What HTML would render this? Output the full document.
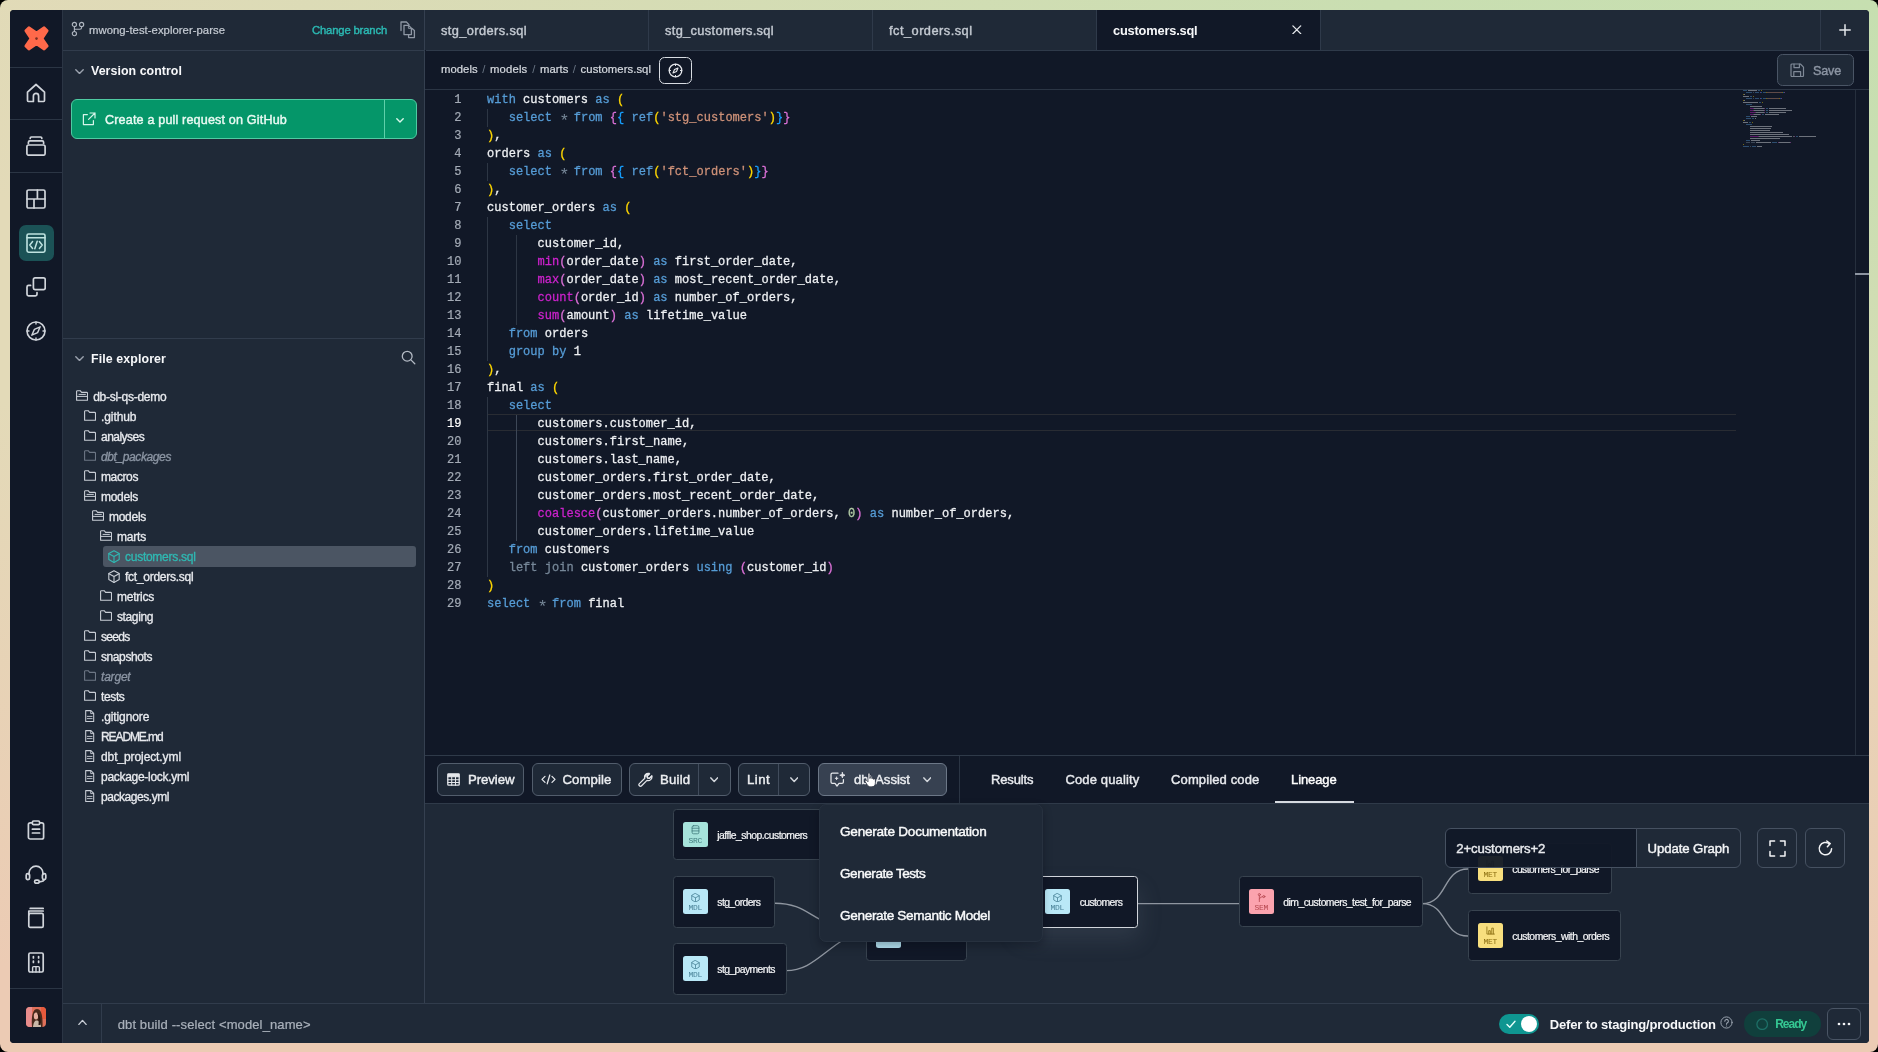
<!DOCTYPE html>
<html>
<head>
<meta charset="utf-8">
<title>dbt Cloud IDE</title>
<style>
*{box-sizing:border-box;margin:0;padding:0}
html,body{width:1878px;height:1052px;overflow:hidden;background:#000}
body{font-family:"Liberation Sans",sans-serif;color:#e5e7eb;position:relative}
.abs{position:absolute}
#frame{position:absolute;left:0;top:0;width:1878px;height:1052px;border-radius:8px;overflow:hidden;
 background:
  linear-gradient(180deg,rgba(236,203,180,0) 38%,rgba(236,203,180,1) 92%),
  radial-gradient(ellipse 105% 62% at 100% 0%,#c6dfb0 0%,#c9deb1 25%,rgba(203,222,178,0) 100%),
  #e3dab8;}
#app{position:absolute;left:10px;top:10px;width:1859.2px;height:1032.6px;border-radius:4px;overflow:hidden;background:#111827}
#c{position:absolute;left:-10px;top:-10px;width:1878px;height:1052px;will-change:transform}
.t{position:absolute;white-space:pre;line-height:1}
.m{font-family:"Liberation Mono",monospace}

.cl{position:absolute;left:487px;height:18px;line-height:18px;font-family:"Liberation Mono",monospace;font-size:12.045px;white-space:pre;color:#eef0f3;-webkit-text-stroke:0.28px}
.as{display:inline-block;width:7.227px;text-align:center;font-size:17px;line-height:0;position:relative;top:5.2px;-webkit-text-stroke:0}
.ln{position:absolute;left:430px;width:31.5px;text-align:right;height:18px;line-height:18px;font-family:"Liberation Mono",monospace;font-size:12.045px;color:#a4abb6;-webkit-text-stroke:0.2px}

</style>
</head>
<body>
<div id="frame"></div>
<div id="app"><div id="c">
<!-- part_nav -->
<div class="abs" style="left:10px;top:10px;width:52px;height:1033px;background:#111827;"></div>
<div class="abs" style="left:62px;top:10px;width:1px;height:1033px;background:#2b3544"></div>
<svg class="abs" style="left:23.2px;top:24.9px" width="27" height="26.8" viewBox="0 0 26 26"><polygon points="2.6,5.6 5.6,2.6 13,7.6 20.4,2.6 23.4,5.6 18.4,13 23.4,20.4 20.4,23.4 13,18.4 5.6,23.4 2.6,20.4 7.6,13" fill="#ff694a" stroke="#ff694a" stroke-width="2.6" stroke-linejoin="round"/><circle cx="13" cy="13.2" r="1.25" fill="#7a2e22"/></svg>
<div class="abs" style="left:10px;top:67px;width:52px;height:1px;background:#2b3544"></div>
<svg class="abs" style="left:26px;top:83px;" width="20" height="20" viewBox="0 0 20 20" fill="none" stroke="#d1d5db" stroke-width="1.7" stroke-linecap="round" stroke-linejoin="round"><path d="M1.5 9.2 L10 1.5 L18.5 9.2 V17.6 a.9 .9 0 0 1 -.9 .9 H12.6 V13 a2.6 2.6 0 0 0 -5.2 0 V18.5 H2.4 a.9 .9 0 0 1 -.9 -.9 Z"/></svg>
<div class="abs" style="left:10px;top:119px;width:52px;height:1px;background:#2b3544"></div>
<svg class="abs" style="left:26px;top:136px;" width="20" height="20" viewBox="0 0 20 20" fill="none" stroke="#d1d5db" stroke-width="1.7" stroke-linecap="round" stroke-linejoin="round"><rect x="0.9" y="9" width="18.2" height="10.2" rx="1.7"/><path d="M2.4 7.4 V6.2 a1.4 1.4 0 0 1 1.4 -1.4 H16.2 a1.4 1.4 0 0 1 1.4 1.4 V7.4"/><path d="M4.2 2.4 V2.2 a1.2 1.2 0 0 1 1.2 -1.2 H14.6 a1.2 1.2 0 0 1 1.2 1.2 V2.4"/></svg>
<div class="abs" style="left:10px;top:172px;width:52px;height:1px;background:#2b3544"></div>
<svg class="abs" style="left:26px;top:189px;" width="20" height="20" viewBox="0 0 20 20" fill="none" stroke="#d1d5db" stroke-width="1.7" stroke-linecap="round" stroke-linejoin="round"><rect x="1" y="1" width="18" height="18" rx="1.6"/><path d="M1 10 H19 M11.4 1 V10 M8 10 V19"/></svg>
<div class="abs" style="left:19px;top:225px;width:35px;height:36px;background:#1b5256;border-radius:7px;"></div>
<svg class="abs" style="left:26px;top:233px;" width="20" height="20" viewBox="0 0 20 20" fill="none" stroke="#bfe3e0" stroke-width="1.6" stroke-linecap="round" stroke-linejoin="round"><rect x="1" y="1" width="18" height="18.2" rx="1.6"/><path d="M1 4.8 H19"/><path d="M6.6 8.6 L3.8 12 L6.6 15.4 M13.4 8.6 L16.2 12 L13.4 15.4 M11.2 8.2 L8.8 15.8" stroke-width="1.5"/></svg>
<svg class="abs" style="left:26px;top:277px;" width="20" height="20" viewBox="0 0 20 20" fill="none" stroke="#d1d5db" stroke-width="1.7" stroke-linecap="round" stroke-linejoin="round"><rect x="7.4" y="0.9" width="11.8" height="11.8" rx="1.6"/><path d="M4.6 8.4 H2.6 a1.6 1.6 0 0 0 -1.6 1.6 V17.2 a1.6 1.6 0 0 0 1.6 1.6 H9.4 a1.6 1.6 0 0 0 1.6 -1.6 V15.6"/></svg>
<svg class="abs" style="left:26px;top:321px;" width="20" height="20" viewBox="0 0 20 20" fill="none" stroke="#d1d5db" stroke-width="1.6" stroke-linecap="round" stroke-linejoin="round"><circle cx="10" cy="10" r="9"/><path d="M10 1 V3 M10 17 V19 M1 10 H3 M17 10 H19" stroke-width="1.4"/><path d="M14.2 5.8 L11.6 11.6 L5.8 14.2 L8.4 8.4 Z" stroke-width="1.4"/></svg>
<svg class="abs" style="left:27px;top:820px;" width="18" height="20" viewBox="0 0 18 20" fill="none" stroke="#d1d5db" stroke-width="1.7" stroke-linecap="round" stroke-linejoin="round"><rect x="1.4" y="2.8" width="15.2" height="16.2" rx="1.8"/><rect x="5.4" y="1" width="7.2" height="3.6" rx="1.2" fill="#111827"/><path d="M5.4 9.2 H12.6 M5.4 13 H12.6"/></svg>
<svg class="abs" style="left:25px;top:864px;" width="22" height="20" viewBox="0 0 22 20" fill="none" stroke="#d1d5db" stroke-width="1.7" stroke-linecap="round" stroke-linejoin="round"><path d="M4 10.5 V9.2 a7 7 0 0 1 14 0 V10.5"/><rect x="1.2" y="9.6" width="3.4" height="6" rx="1.6"/><rect x="17.4" y="9.6" width="3.4" height="6" rx="1.6"/><path d="M19 15.6 Q19 17.8 14.4 17.8"/><rect x="9.6" y="16.2" width="4.6" height="3" rx="1.4"/></svg>
<svg class="abs" style="left:27px;top:907px;" width="18" height="22" viewBox="0 0 18 22" fill="none" stroke="#d1d5db" stroke-width="1.7" stroke-linecap="round" stroke-linejoin="round"><rect x="1.8" y="6.4" width="14.4" height="14" rx="1.4"/><path d="M1.8 8 V4 M1.8 4 H16.2 M3.2 1.4 H16.2"/></svg>
<svg class="abs" style="left:27px;top:952px;" width="18" height="21" viewBox="0 0 18 21" fill="none" stroke="#d1d5db" stroke-width="1.7" stroke-linecap="round" stroke-linejoin="round"><rect x="1.8" y="1" width="14.4" height="19" rx="1.4"/><path d="M6.4 4.6 V6 M11.6 4.6 V6 M6.4 9 V10.4 M11.6 9 V10.4"/><path d="M5.6 20 V15.6 a1 1 0 0 1 1 -1 H11.4 a1 1 0 0 1 1 1 V20 M9 15 V20" stroke-width="1.4"/></svg>
<div class="abs" style="left:10px;top:988px;width:52px;height:1px;background:#2b3544"></div>
<svg class="abs" style="left:26px;top:1007px" width="20" height="20" viewBox="0 0 20 20"><defs><clipPath id="av"><rect x="0" y="0" width="20" height="20" rx="4"/></clipPath></defs><g clip-path="url(#av)"><rect width="20" height="20" fill="#e0705a"/><rect x="0" y="0" width="6" height="20" fill="#e88c8c"/><rect x="15" y="0" width="5" height="12" fill="#e85a3c"/><path d="M6 20 C5 9 7 2 11 2 C15 2 17 8 16.5 20 Z" fill="#4a2a1c"/><ellipse cx="10" cy="9" rx="2.2" ry="3.6" fill="#e8b0a0"/><path d="M7 20 C7.5 15 9 13.5 10.5 13.5 C13 13.5 15 16 15 20 Z" fill="#c9b8a8"/><path d="M11 6 C14 7 15 12 14.5 18 L12.5 18 C13 12 12.5 9 11 6 Z" fill="#2a1710"/></g></svg>
<!-- part_side -->
<div class="abs" style="left:63px;top:10px;width:361.5px;height:993px;background:#1f2937;"></div>
<div class="abs" style="left:424.3px;top:10px;width:1px;height:993px;background:#354050"></div>
<svg class="abs" style="left:71px;top:21px;" width="14" height="16" viewBox="0 0 14 16" fill="none" stroke="#aeb5bf" stroke-width="1.15" stroke-linecap="round" stroke-linejoin="round"><circle cx="3.4" cy="3.4" r="2.1"/><circle cx="10.6" cy="3.4" r="2.1"/><circle cx="3.4" cy="12.6" r="2.1"/><path d="M3.4 5.6 V10.4 M10.6 5.6 V6.4 a1.8 1.8 0 0 1 -1.8 1.8 H3.6"/></svg>
<div class="t" style="left:89px;top:24.66px;font-size:11.3px;color:#c4cad2;-webkit-text-stroke:0.22px #c4cad2;letter-spacing:0.041px;">mwong-test-explorer-parse</div>
<div class="t" style="left:312px;top:24.66px;font-size:11.3px;color:#2bb8b2;-webkit-text-stroke:0.42px #2bb8b2;letter-spacing:-0.174px;">Change branch</div>
<svg class="abs" style="left:400px;top:20.5px;" width="16" height="18" viewBox="0 0 16 18" fill="none" stroke="#8f98a5" stroke-width="1.3" stroke-linecap="round" stroke-linejoin="round"><path d="M1 9.6 V1 H6.4 L9 3.6"/><path d="M4 4.4 H8.6 L11.4 7.2 V13.6 H4 Z" /><path d="M8.4 4.6 V7.4 H11.2" stroke-width="0.9"/><path d="M8.6 13.8 V16.6 H14.4 V9.6 L12 7.4" /></svg>
<div class="abs" style="left:63px;top:50px;width:362px;height:1px;background:#313c4c"></div>
<svg class="abs" style="left:74.5px;top:68.75px;" width="9" height="5.5" viewBox="0 0 9 5.5" fill="none" stroke="#9ca3af" stroke-width="1.4" stroke-linecap="round" stroke-linejoin="round"><path d="M0.8 0.8 L4.5 4.5 L8.2 0.8"/></svg>
<div class="t" style="left:91px;top:65.32px;font-size:12.4px;color:#f7f8fa;font-weight:700;letter-spacing:0.053px;">Version control</div>
<div class="abs" style="left:71px;top:99px;width:346px;height:40px;background:#059669;border:1px solid #4fcba2;border-radius:6px;"></div>
<div class="abs" style="left:384px;top:100px;width:1px;height:38px;background:#5fd0aa"></div>
<svg class="abs" style="left:82px;top:112px;" width="14" height="14" viewBox="0 0 14 14" fill="none" stroke="#d6f5ea" stroke-width="1.2" stroke-linecap="round" stroke-linejoin="round"><path d="M5.4 2.6 H1.4 V12.6 H11.4 V8.6"/><path d="M8 1 H13 V6 M13 1 L6.6 7.4"/></svg>
<div class="t" style="left:105px;top:113.73px;font-size:12.6px;color:#eafaf3;-webkit-text-stroke:0.42px #eafaf3;letter-spacing:0.157px;">Create a pull request on GitHub</div>
<svg class="abs" style="left:396.0px;top:117.8px;" width="8" height="5.0" viewBox="0 0 8 5.0" fill="none" stroke="#d9f7ea" stroke-width="1.4" stroke-linecap="round" stroke-linejoin="round"><path d="M0.8 0.8 L4.0 4.0 L7.2 0.8"/></svg>
<div class="abs" style="left:63px;top:338px;width:362px;height:1px;background:#313c4c"></div>
<svg class="abs" style="left:74.5px;top:355.75px;" width="9" height="5.5" viewBox="0 0 9 5.5" fill="none" stroke="#9ca3af" stroke-width="1.4" stroke-linecap="round" stroke-linejoin="round"><path d="M0.8 0.8 L4.5 4.5 L8.2 0.8"/></svg>
<div class="t" style="left:91px;top:352.52px;font-size:12.4px;color:#f7f8fa;font-weight:700;letter-spacing:0.101px;">File explorer</div>
<svg class="abs" style="left:401px;top:350px;" width="15" height="15" viewBox="0 0 15 15" fill="none" stroke="#b3bac4" stroke-width="1.3" stroke-linecap="round" stroke-linejoin="round"><circle cx="6.2" cy="6.2" r="4.9"/><path d="M9.9 9.9 L13.8 13.8"/></svg>
<svg class="abs" style="left:76px;top:390.0px;" width="12" height="11" viewBox="0 0 12 11" fill="none" stroke="#c9ced6" stroke-width="1.1" stroke-linecap="round" stroke-linejoin="round"><path d="M0.6 10.2 V1.6 a.9 .9 0 0 1 .9 -.9 H4.2 L5.6 2.4 H10.6 a.9 .9 0 0 1 .9 .9 V10.2 Z"/><path d="M3 4.4 H9.4 M0.8 6.4 H11.2" stroke-width="1"/></svg>
<div class="t" style="left:93.2px;top:391.22px;font-size:12px;color:#e8eaee;-webkit-text-stroke:0.32px #e8eaee;letter-spacing:-0.269px;">db-sl-qs-demo</div>
<svg class="abs" style="left:84px;top:410.0px;" width="12" height="11" viewBox="0 0 12 11" fill="none" stroke="#c9ced6" stroke-width="1.1" stroke-linecap="round" stroke-linejoin="round"><path d="M0.6 10.2 V1.6 a.9 .9 0 0 1 .9 -.9 H4.2 L5.6 2.4 H10.6 a.9 .9 0 0 1 .9 .9 V10.2 Z"/></svg>
<div class="t" style="left:101px;top:411.22px;font-size:12px;color:#e8eaee;-webkit-text-stroke:0.32px #e8eaee;letter-spacing:-0.090px;">.github</div>
<svg class="abs" style="left:84px;top:430.0px;" width="12" height="11" viewBox="0 0 12 11" fill="none" stroke="#c9ced6" stroke-width="1.1" stroke-linecap="round" stroke-linejoin="round"><path d="M0.6 10.2 V1.6 a.9 .9 0 0 1 .9 -.9 H4.2 L5.6 2.4 H10.6 a.9 .9 0 0 1 .9 .9 V10.2 Z"/></svg>
<div class="t" style="left:101px;top:431.22px;font-size:12px;color:#e8eaee;-webkit-text-stroke:0.32px #e8eaee;letter-spacing:-0.522px;">analyses</div>
<svg class="abs" style="left:84px;top:450.0px;" width="12" height="11" viewBox="0 0 12 11" fill="none" stroke="#6d7785" stroke-width="1.1" stroke-linecap="round" stroke-linejoin="round"><path d="M0.6 10.2 V1.6 a.9 .9 0 0 1 .9 -.9 H4.2 L5.6 2.4 H10.6 a.9 .9 0 0 1 .9 .9 V10.2 Z"/></svg>
<div class="t" style="left:101px;top:451.22px;font-size:12px;color:#8b95a3;-webkit-text-stroke:0.32px #8b95a3;font-style:italic;letter-spacing:-0.395px;">dbt_packages</div>
<svg class="abs" style="left:84px;top:470.0px;" width="12" height="11" viewBox="0 0 12 11" fill="none" stroke="#c9ced6" stroke-width="1.1" stroke-linecap="round" stroke-linejoin="round"><path d="M0.6 10.2 V1.6 a.9 .9 0 0 1 .9 -.9 H4.2 L5.6 2.4 H10.6 a.9 .9 0 0 1 .9 .9 V10.2 Z"/></svg>
<div class="t" style="left:101px;top:471.22px;font-size:12px;color:#e8eaee;-webkit-text-stroke:0.32px #e8eaee;letter-spacing:-0.391px;">macros</div>
<svg class="abs" style="left:84px;top:490.0px;" width="12" height="11" viewBox="0 0 12 11" fill="none" stroke="#c9ced6" stroke-width="1.1" stroke-linecap="round" stroke-linejoin="round"><path d="M0.6 10.2 V1.6 a.9 .9 0 0 1 .9 -.9 H4.2 L5.6 2.4 H10.6 a.9 .9 0 0 1 .9 .9 V10.2 Z"/><path d="M3 4.4 H9.4 M0.8 6.4 H11.2" stroke-width="1"/></svg>
<div class="t" style="left:101px;top:491.22px;font-size:12px;color:#e8eaee;-webkit-text-stroke:0.32px #e8eaee;letter-spacing:-0.281px;">models</div>
<svg class="abs" style="left:92px;top:510.0px;" width="12" height="11" viewBox="0 0 12 11" fill="none" stroke="#c9ced6" stroke-width="1.1" stroke-linecap="round" stroke-linejoin="round"><path d="M0.6 10.2 V1.6 a.9 .9 0 0 1 .9 -.9 H4.2 L5.6 2.4 H10.6 a.9 .9 0 0 1 .9 .9 V10.2 Z"/><path d="M3 4.4 H9.4 M0.8 6.4 H11.2" stroke-width="1"/></svg>
<div class="t" style="left:109px;top:511.22px;font-size:12px;color:#e8eaee;-webkit-text-stroke:0.32px #e8eaee;letter-spacing:-0.281px;">models</div>
<svg class="abs" style="left:100px;top:530.0px;" width="12" height="11" viewBox="0 0 12 11" fill="none" stroke="#c9ced6" stroke-width="1.1" stroke-linecap="round" stroke-linejoin="round"><path d="M0.6 10.2 V1.6 a.9 .9 0 0 1 .9 -.9 H4.2 L5.6 2.4 H10.6 a.9 .9 0 0 1 .9 .9 V10.2 Z"/><path d="M3 4.4 H9.4 M0.8 6.4 H11.2" stroke-width="1"/></svg>
<div class="t" style="left:117px;top:531.22px;font-size:12px;color:#e8eaee;-webkit-text-stroke:0.32px #e8eaee;letter-spacing:-0.200px;">marts</div>
<div class="abs" style="left:103px;top:546px;width:313px;height:21px;background:#4b5563;border-radius:3px;"></div>
<svg class="abs" style="left:108px;top:549.5px;" width="12" height="13.2" viewBox="0 0 12 13.2" fill="none" stroke="#2fb9b3" stroke-width="1.1" stroke-linecap="round" stroke-linejoin="round"><path d="M6 0.7 L11.2 3.6 V9.6 L6 12.5 L0.8 9.6 V3.6 Z"/><path d="M0.9 3.7 L6 6.6 L11.1 3.7 M6 6.6 V12.4" /></svg>
<div class="t" style="left:125px;top:551.22px;font-size:12px;color:#2fb9b3;-webkit-text-stroke:0.32px #2fb9b3;letter-spacing:-0.264px;">customers.sql</div>
<svg class="abs" style="left:108px;top:569.5px;" width="12" height="13.2" viewBox="0 0 12 13.2" fill="none" stroke="#c9ced6" stroke-width="1.1" stroke-linecap="round" stroke-linejoin="round"><path d="M6 0.7 L11.2 3.6 V9.6 L6 12.5 L0.8 9.6 V3.6 Z"/><path d="M0.9 3.7 L6 6.6 L11.1 3.7 M6 6.6 V12.4" /></svg>
<div class="t" style="left:125px;top:571.22px;font-size:12px;color:#e8eaee;-webkit-text-stroke:0.32px #e8eaee;letter-spacing:-0.259px;">fct_orders.sql</div>
<svg class="abs" style="left:100px;top:590.0px;" width="12" height="11" viewBox="0 0 12 11" fill="none" stroke="#c9ced6" stroke-width="1.1" stroke-linecap="round" stroke-linejoin="round"><path d="M0.6 10.2 V1.6 a.9 .9 0 0 1 .9 -.9 H4.2 L5.6 2.4 H10.6 a.9 .9 0 0 1 .9 .9 V10.2 Z"/></svg>
<div class="t" style="left:117px;top:591.22px;font-size:12px;color:#e8eaee;-webkit-text-stroke:0.32px #e8eaee;letter-spacing:-0.239px;">metrics</div>
<svg class="abs" style="left:100px;top:610.0px;" width="12" height="11" viewBox="0 0 12 11" fill="none" stroke="#c9ced6" stroke-width="1.1" stroke-linecap="round" stroke-linejoin="round"><path d="M0.6 10.2 V1.6 a.9 .9 0 0 1 .9 -.9 H4.2 L5.6 2.4 H10.6 a.9 .9 0 0 1 .9 .9 V10.2 Z"/></svg>
<div class="t" style="left:117px;top:611.22px;font-size:12px;color:#e8eaee;-webkit-text-stroke:0.32px #e8eaee;letter-spacing:-0.386px;">staging</div>
<svg class="abs" style="left:84px;top:630.0px;" width="12" height="11" viewBox="0 0 12 11" fill="none" stroke="#c9ced6" stroke-width="1.1" stroke-linecap="round" stroke-linejoin="round"><path d="M0.6 10.2 V1.6 a.9 .9 0 0 1 .9 -.9 H4.2 L5.6 2.4 H10.6 a.9 .9 0 0 1 .9 .9 V10.2 Z"/></svg>
<div class="t" style="left:101px;top:631.22px;font-size:12px;color:#e8eaee;-webkit-text-stroke:0.32px #e8eaee;letter-spacing:-0.706px;">seeds</div>
<svg class="abs" style="left:84px;top:650.0px;" width="12" height="11" viewBox="0 0 12 11" fill="none" stroke="#c9ced6" stroke-width="1.1" stroke-linecap="round" stroke-linejoin="round"><path d="M0.6 10.2 V1.6 a.9 .9 0 0 1 .9 -.9 H4.2 L5.6 2.4 H10.6 a.9 .9 0 0 1 .9 .9 V10.2 Z"/></svg>
<div class="t" style="left:101px;top:651.22px;font-size:12px;color:#e8eaee;-webkit-text-stroke:0.32px #e8eaee;letter-spacing:-0.411px;">snapshots</div>
<svg class="abs" style="left:84px;top:670.0px;" width="12" height="11" viewBox="0 0 12 11" fill="none" stroke="#6d7785" stroke-width="1.1" stroke-linecap="round" stroke-linejoin="round"><path d="M0.6 10.2 V1.6 a.9 .9 0 0 1 .9 -.9 H4.2 L5.6 2.4 H10.6 a.9 .9 0 0 1 .9 .9 V10.2 Z"/></svg>
<div class="t" style="left:101px;top:671.22px;font-size:12px;color:#8b95a3;-webkit-text-stroke:0.32px #8b95a3;font-style:italic;letter-spacing:-0.198px;">target</div>
<svg class="abs" style="left:84px;top:690.0px;" width="12" height="11" viewBox="0 0 12 11" fill="none" stroke="#c9ced6" stroke-width="1.1" stroke-linecap="round" stroke-linejoin="round"><path d="M0.6 10.2 V1.6 a.9 .9 0 0 1 .9 -.9 H4.2 L5.6 2.4 H10.6 a.9 .9 0 0 1 .9 .9 V10.2 Z"/></svg>
<div class="t" style="left:101px;top:691.22px;font-size:12px;color:#e8eaee;-webkit-text-stroke:0.32px #e8eaee;letter-spacing:-0.369px;">tests</div>
<svg class="abs" style="left:85.4px;top:709.8px;" width="9.4" height="12" viewBox="0 0 9.2 12" fill="none" stroke="#c9ced6" stroke-width="1.05" stroke-linecap="round" stroke-linejoin="round"><path d="M0.6 0.6 H5.8 L8.6 3.4 V11.4 H0.6 Z"/><path d="M5.6 0.8 V3.6 H8.4" stroke-width="0.9"/><path d="M2.2 6.4 H7 M2.2 8.6 H7" stroke-width="0.9"/></svg>
<div class="t" style="left:101px;top:711.22px;font-size:12px;color:#e8eaee;-webkit-text-stroke:0.32px #e8eaee;letter-spacing:-0.117px;">.gitignore</div>
<svg class="abs" style="left:85.4px;top:729.8px;" width="9.4" height="12" viewBox="0 0 9.2 12" fill="none" stroke="#c9ced6" stroke-width="1.05" stroke-linecap="round" stroke-linejoin="round"><path d="M0.6 0.6 H5.8 L8.6 3.4 V11.4 H0.6 Z"/><path d="M5.6 0.8 V3.6 H8.4" stroke-width="0.9"/><path d="M2.2 6.4 H7 M2.2 8.6 H7" stroke-width="0.9"/></svg>
<div class="t" style="left:101px;top:731.22px;font-size:12px;color:#e8eaee;-webkit-text-stroke:0.32px #e8eaee;letter-spacing:-1.094px;">README.md</div>
<svg class="abs" style="left:85.4px;top:749.8px;" width="9.4" height="12" viewBox="0 0 9.2 12" fill="none" stroke="#c9ced6" stroke-width="1.05" stroke-linecap="round" stroke-linejoin="round"><path d="M0.6 0.6 H5.8 L8.6 3.4 V11.4 H0.6 Z"/><path d="M5.6 0.8 V3.6 H8.4" stroke-width="0.9"/><path d="M2.2 6.4 H7 M2.2 8.6 H7" stroke-width="0.9"/></svg>
<div class="t" style="left:101px;top:751.22px;font-size:12px;color:#e8eaee;-webkit-text-stroke:0.32px #e8eaee;letter-spacing:-0.092px;">dbt_project.yml</div>
<svg class="abs" style="left:85.4px;top:769.8px;" width="9.4" height="12" viewBox="0 0 9.2 12" fill="none" stroke="#c9ced6" stroke-width="1.05" stroke-linecap="round" stroke-linejoin="round"><path d="M0.6 0.6 H5.8 L8.6 3.4 V11.4 H0.6 Z"/><path d="M5.6 0.8 V3.6 H8.4" stroke-width="0.9"/><path d="M2.2 6.4 H7 M2.2 8.6 H7" stroke-width="0.9"/></svg>
<div class="t" style="left:101px;top:771.22px;font-size:12px;color:#e8eaee;-webkit-text-stroke:0.32px #e8eaee;letter-spacing:-0.294px;">package-lock.yml</div>
<svg class="abs" style="left:85.4px;top:789.8px;" width="9.4" height="12" viewBox="0 0 9.2 12" fill="none" stroke="#c9ced6" stroke-width="1.05" stroke-linecap="round" stroke-linejoin="round"><path d="M0.6 0.6 H5.8 L8.6 3.4 V11.4 H0.6 Z"/><path d="M5.6 0.8 V3.6 H8.4" stroke-width="0.9"/><path d="M2.2 6.4 H7 M2.2 8.6 H7" stroke-width="0.9"/></svg>
<div class="t" style="left:101px;top:791.22px;font-size:12px;color:#e8eaee;-webkit-text-stroke:0.32px #e8eaee;letter-spacing:-0.448px;">packages.yml</div>
<!-- part_main -->
<div class="abs" style="left:425.3px;top:10px;width:1444px;height:40px;background:#1f2937;"></div>
<div class="abs" style="left:1097px;top:10px;width:223px;height:40px;background:#111827;"></div>
<div class="abs" style="left:648px;top:10px;width:1px;height:40px;background:#2f3a4a"></div>
<div class="abs" style="left:872px;top:10px;width:1px;height:40px;background:#2f3a4a"></div>
<div class="abs" style="left:1096px;top:10px;width:1px;height:40px;background:#2f3a4a"></div>
<div class="abs" style="left:1320px;top:10px;width:1px;height:40px;background:#2f3a4a"></div>
<div class="abs" style="left:1819.8px;top:10px;width:1px;height:40px;background:#2f3a4a"></div>
<div class="abs" style="left:426px;top:50px;width:1443px;height:1px;background:#2f3a4a"></div>
<div class="t" style="left:441px;top:25.03px;font-size:12.8px;color:#c3c9d1;-webkit-text-stroke:0.42px #c3c9d1;letter-spacing:0.402px;">stg_orders.sql</div>
<div class="t" style="left:665px;top:25.03px;font-size:12.8px;color:#c3c9d1;-webkit-text-stroke:0.42px #c3c9d1;letter-spacing:0.346px;">stg_customers.sql</div>
<div class="t" style="left:889px;top:25.03px;font-size:12.8px;color:#c3c9d1;-webkit-text-stroke:0.42px #c3c9d1;letter-spacing:0.477px;">fct_orders.sql</div>
<div class="t" style="left:1113px;top:25.23px;font-size:12.8px;color:#f7f8fa;font-weight:700;letter-spacing:-0.175px;">customers.sql</div>
<svg class="abs" style="left:1292.2px;top:24.9px;" width="9.6" height="9.6" viewBox="0 0 9.6 9.6" fill="none" stroke="#e5e7eb" stroke-width="1.3" stroke-linecap="round" stroke-linejoin="round"><path d="M0.9 0.9 L8.7 8.7 M8.7 0.9 L0.9 8.7"/></svg>
<svg class="abs" style="left:1839px;top:23.6px;" width="12" height="12" viewBox="0 0 12 12" fill="none" stroke="#e5e7eb" stroke-width="1.5" stroke-linecap="round" stroke-linejoin="round"><path d="M6 0.8 V11.2 M0.8 6 H11.2"/></svg>
<div class="t" style="left:441px;top:63.66px;font-size:11.3px;color:#d5d9df;-webkit-text-stroke:0.22px #d5d9df;letter-spacing:0.030px;">models</div>
<div class="t" style="left:482.2px;top:63.66px;font-size:11.3px;color:#6b7685;">/</div>
<div class="t" style="left:490px;top:63.66px;font-size:11.3px;color:#d5d9df;-webkit-text-stroke:0.22px #d5d9df;letter-spacing:0.163px;">models</div>
<div class="t" style="left:532.2px;top:63.66px;font-size:11.3px;color:#6b7685;">/</div>
<div class="t" style="left:540px;top:63.66px;font-size:11.3px;color:#d5d9df;-webkit-text-stroke:0.22px #d5d9df;letter-spacing:0.030px;">marts</div>
<div class="t" style="left:572.8px;top:63.66px;font-size:11.3px;color:#6b7685;">/</div>
<div class="t" style="left:580.6px;top:63.66px;font-size:11.3px;color:#d5d9df;-webkit-text-stroke:0.22px #d5d9df;letter-spacing:0.055px;">customers.sql</div>
<div class="abs" style="left:659px;top:56.5px;width:32.5px;height:27px;border:1.3px solid #d8dce2;border-radius:5.5px;"></div>
<svg class="abs" style="left:667.5px;top:62.5px;" width="15" height="15" viewBox="0 0 15 15" fill="none" stroke="#e5e7eb" stroke-width="1.3" stroke-linecap="round" stroke-linejoin="round"><circle cx="7.5" cy="7.5" r="6.3"/><path d="M7.5 1.2 V2.6 M7.5 12.4 V13.8 M1.2 7.5 H2.6 M12.4 7.5 H13.8" stroke-width="1"/><path d="M10 5 L8.5 8.5 L5 10 L6.5 6.5 Z" stroke-width="1.1"/></svg>
<div class="abs" style="left:1777px;top:53.5px;width:76.5px;height:32.8px;background:#1f2937;border:1px solid #4a5565;border-radius:5.5px;"></div>
<svg class="abs" style="left:1790px;top:62.8px;" width="14.5" height="14.5" viewBox="0 0 14.5 14.5" fill="none" stroke="#7f8997" stroke-width="1.2" stroke-linecap="round" stroke-linejoin="round"><path d="M1 2 a1 1 0 0 1 1 -1 H10.4 L13.5 4.1 V12.5 a1 1 0 0 1 -1 1 H2 a1 1 0 0 1 -1 -1 Z"/><path d="M4 1.2 V4.6 H9.4 V1.2 M3.8 13.4 V8.6 H10.6 V13.4" /></svg>
<div class="t" style="left:1813px;top:64.93px;font-size:12.6px;color:#8c95a3;-webkit-text-stroke:0.42px #8c95a3;letter-spacing:-0.180px;">Save</div>
<div class="abs" style="left:425.3px;top:88.6px;width:1444px;height:1px;background:#2b3544"></div>
<div class="abs" style="left:1855px;top:90px;width:1px;height:665px;background:#262f3d"></div>
<div class="abs" style="left:1855px;top:272.5px;width:14px;height:2px;background:#8d95a1;"></div>
<div class="abs" style="left:425.3px;top:755px;width:1444px;height:1px;background:#2f3a49"></div>
<div class="abs" style="left:425.3px;top:803.4px;width:1444px;height:1px;background:#2f3a49"></div>
<div class="abs" style="left:958.5px;top:756px;width:1px;height:47px;background:#2b3544"></div>
<div class="abs" style="left:437px;top:763px;width:87px;height:32.5px;background:#1f2937;border:1px solid #525d6c;border-radius:6px;"></div>
<svg class="abs" style="left:446.5px;top:772.5px;" width="13" height="13" viewBox="0 0 13 13" fill="none" stroke="#e5e7eb" stroke-width="1.3" stroke-linecap="round" stroke-linejoin="round"><rect x="0.8" y="0.8" width="11.4" height="11.4" rx="0.7"/><path d="M0.8 3.8 H12.2 M0.8 6.7 H12.2 M0.8 9.5 H12.2 M4.7 3.6 V12.2 M8.5 3.6 V12.2" stroke-width="1.05"/><rect x="0.8" y="0.8" width="11.4" height="3" fill="#e5e7eb" stroke="none"/></svg>
<div class="t" style="left:468px;top:773.13px;font-size:13.2px;color:#eceef1;-webkit-text-stroke:0.42px #eceef1;letter-spacing:-0.072px;">Preview</div>
<div class="abs" style="left:532px;top:763px;width:89.5px;height:32.5px;background:#1f2937;border:1px solid #525d6c;border-radius:6px;"></div>
<svg class="abs" style="left:540.5px;top:774px;" width="15" height="11" viewBox="0 0 15 11" fill="none" stroke="#e5e7eb" stroke-width="1.3" stroke-linecap="round" stroke-linejoin="round"><path d="M4 2.4 L1 5.4 L4 8.4 M11 2.4 L14 5.4 L11 8.4 M8.8 1 L6.2 9.8"/></svg>
<div class="t" style="left:562.5px;top:773.13px;font-size:13.2px;color:#eceef1;-webkit-text-stroke:0.42px #eceef1;letter-spacing:0.089px;">Compile</div>
<div class="abs" style="left:629px;top:763px;width:101.5px;height:32.5px;background:#1f2937;border:1px solid #525d6c;border-radius:6px;"></div>
<div class="abs" style="left:698px;top:764px;width:1px;height:30.5px;background:#414c5c"></div>
<svg class="abs" style="left:637.5px;top:771.5px;" width="15" height="15" viewBox="0 0 15 15" fill="none" stroke="#e5e7eb" stroke-width="1.25" stroke-linecap="round" stroke-linejoin="round"><path d="M9.2 4.4 a3.6 3.6 0 0 1 4.6 -3 L11.4 3.8 L11.8 5.6 L13.6 6 L16 3.6" transform="translate(-2.2 0.4)"/><path d="M13.8 4 a3.7 3.7 0 0 1 -4.8 4.4 L3.6 13.8 a1.5 1.5 0 0 1 -2.2 -2.2 L6.8 6.2 a3.7 3.7 0 0 1 4.4 -4.8 L8.8 3.8 L9.4 5.8 L11.4 6.4 Z"/></svg>
<div class="t" style="left:660px;top:773.13px;font-size:13.2px;color:#eceef1;-webkit-text-stroke:0.42px #eceef1;letter-spacing:0.214px;">Build</div>
<svg class="abs" style="left:709.8px;top:777.0px;" width="8.4" height="5.800000000000001" viewBox="0 0 8.4 5.800000000000001" fill="none" stroke="#d1d5db" stroke-width="1.5" stroke-linecap="round" stroke-linejoin="round"><path d="M0.9 0.9 L4.2 4.5 L7.5 0.9"/></svg>
<div class="abs" style="left:738px;top:763px;width:72px;height:32.5px;background:#1f2937;border:1px solid #525d6c;border-radius:6px;"></div>
<div class="abs" style="left:778px;top:764px;width:1px;height:30.5px;background:#414c5c"></div>
<div class="t" style="left:747px;top:773.13px;font-size:13.2px;color:#eceef1;-webkit-text-stroke:0.42px #eceef1;letter-spacing:0.484px;">Lint</div>
<svg class="abs" style="left:789.5px;top:777.0px;" width="8.4" height="5.800000000000001" viewBox="0 0 8.4 5.800000000000001" fill="none" stroke="#d1d5db" stroke-width="1.5" stroke-linecap="round" stroke-linejoin="round"><path d="M0.9 0.9 L4.2 4.5 L7.5 0.9"/></svg>
<div class="abs" style="left:818px;top:763px;width:128.5px;height:32.5px;background:#374151;border:1px solid #6c7787;border-radius:6px;"></div>
<svg class="abs" style="left:829.5px;top:771.5px;" width="16" height="16" viewBox="0 0 16 16" fill="none" stroke="#e5e7eb" stroke-width="1.25" stroke-linecap="round" stroke-linejoin="round"><path d="M8 1.2 H2.4 a1.4 1.4 0 0 0 -1.4 1.4 V10 a1.4 1.4 0 0 0 1.4 1.4 H5 L7 14 L9 11.4 H12 a1.4 1.4 0 0 0 1.4 -1.4 V7.6"/><path d="M12.4 0.6 L13 2.6 L15 3.2 L13 3.8 L12.4 5.8 L11.8 3.8 L9.8 3.2 L11.8 2.6 Z" stroke-width="0.9" fill="#e5e7eb"/><path d="M6.6 5 V7.6 M5.3 6.3 H7.9" stroke-width="1"/></svg>
<div class="t" style="left:854px;top:773.13px;font-size:13.2px;color:#eceef1;-webkit-text-stroke:0.42px #eceef1;letter-spacing:-0.045px;">dbt Assist</div>
<svg class="abs" style="left:922.8px;top:777.0px;" width="8.4" height="5.800000000000001" viewBox="0 0 8.4 5.800000000000001" fill="none" stroke="#d1d5db" stroke-width="1.5" stroke-linecap="round" stroke-linejoin="round"><path d="M0.9 0.9 L4.2 4.5 L7.5 0.9"/></svg>
<div class="t" style="left:991px;top:773.03px;font-size:13px;color:#e8eaee;-webkit-text-stroke:0.42px #e8eaee;letter-spacing:-0.137px;">Results</div>
<div class="t" style="left:1065.4px;top:773.03px;font-size:13px;color:#e8eaee;-webkit-text-stroke:0.42px #e8eaee;letter-spacing:0.143px;">Code quality</div>
<div class="t" style="left:1171px;top:773.03px;font-size:13px;color:#e8eaee;-webkit-text-stroke:0.42px #e8eaee;letter-spacing:0.129px;">Compiled code</div>
<div class="t" style="left:1291px;top:773.03px;font-size:13px;color:#ffffff;-webkit-text-stroke:0.42px #ffffff;letter-spacing:-0.097px;">Lineage</div>
<div class="abs" style="left:1275px;top:800.6px;width:78.5px;height:2.2px;background:#d5d9df;"></div>
<!-- part_editor -->
<div class="abs" style="left:487.5px;top:414.4px;width:1248.5px;height:16.8px;border:1px solid #292c33;border-left:none;border-right:none;"></div>
<div class="abs" style="left:487px;top:109.2px;width:1px;height:18px;background:#2d3644"></div>
<div class="abs" style="left:487px;top:163.2px;width:1px;height:18px;background:#2d3644"></div>
<div class="abs" style="left:487px;top:217.2px;width:1px;height:144px;background:#2d3644"></div>
<div class="abs" style="left:487px;top:397.2px;width:1px;height:180px;background:#2d3644"></div>
<div class="abs" style="left:516px;top:235.2px;width:1px;height:90px;background:#2d3644"></div>
<div class="abs" style="left:516px;top:415.2px;width:1px;height:126px;background:#3d4757"></div>
<div class="ln" style="top:91.2px;color:#a4abb6">1</div>
<div class="cl" style="top:91.2px"><span style="color:#569cd6">with</span> customers <span style="color:#569cd6">as</span> <span style="color:#ffd700">(</span></div>
<div class="ln" style="top:109.2px;color:#a4abb6">2</div>
<div class="cl" style="top:109.2px">   <span style="color:#569cd6">select</span> <span class="as" style="color:#778899">*</span> <span style="color:#569cd6">from</span> <span style="color:#da70d6">{</span><span style="color:#179fff">{</span> <span style="color:#569cd6">ref</span><span style="color:#ffd700">(</span><span style="color:#ce9178">'stg_customers'</span><span style="color:#ffd700">)</span><span style="color:#179fff">}</span><span style="color:#da70d6">}</span></div>
<div class="ln" style="top:127.2px;color:#a4abb6">3</div>
<div class="cl" style="top:127.2px"><span style="color:#ffd700">)</span>,</div>
<div class="ln" style="top:145.2px;color:#a4abb6">4</div>
<div class="cl" style="top:145.2px">orders <span style="color:#569cd6">as</span> <span style="color:#ffd700">(</span></div>
<div class="ln" style="top:163.2px;color:#a4abb6">5</div>
<div class="cl" style="top:163.2px">   <span style="color:#569cd6">select</span> <span class="as" style="color:#778899">*</span> <span style="color:#569cd6">from</span> <span style="color:#da70d6">{</span><span style="color:#179fff">{</span> <span style="color:#569cd6">ref</span><span style="color:#ffd700">(</span><span style="color:#ce9178">'fct_orders'</span><span style="color:#ffd700">)</span><span style="color:#179fff">}</span><span style="color:#da70d6">}</span></div>
<div class="ln" style="top:181.2px;color:#a4abb6">6</div>
<div class="cl" style="top:181.2px"><span style="color:#ffd700">)</span>,</div>
<div class="ln" style="top:199.2px;color:#a4abb6">7</div>
<div class="cl" style="top:199.2px">customer_orders <span style="color:#569cd6">as</span> <span style="color:#ffd700">(</span></div>
<div class="ln" style="top:217.2px;color:#a4abb6">8</div>
<div class="cl" style="top:217.2px">   <span style="color:#569cd6">select</span></div>
<div class="ln" style="top:235.2px;color:#a4abb6">9</div>
<div class="cl" style="top:235.2px">       customer_id,</div>
<div class="ln" style="top:253.2px;color:#a4abb6">10</div>
<div class="cl" style="top:253.2px">       <span style="color:#cc22cc">min</span><span style="color:#da70d6">(</span>order_date<span style="color:#da70d6">)</span> <span style="color:#569cd6">as</span> first_order_date,</div>
<div class="ln" style="top:271.2px;color:#a4abb6">11</div>
<div class="cl" style="top:271.2px">       <span style="color:#cc22cc">max</span><span style="color:#da70d6">(</span>order_date<span style="color:#da70d6">)</span> <span style="color:#569cd6">as</span> most_recent_order_date,</div>
<div class="ln" style="top:289.2px;color:#a4abb6">12</div>
<div class="cl" style="top:289.2px">       <span style="color:#cc22cc">count</span><span style="color:#da70d6">(</span>order_id<span style="color:#da70d6">)</span> <span style="color:#569cd6">as</span> number_of_orders,</div>
<div class="ln" style="top:307.2px;color:#a4abb6">13</div>
<div class="cl" style="top:307.2px">       <span style="color:#cc22cc">sum</span><span style="color:#da70d6">(</span>amount<span style="color:#da70d6">)</span> <span style="color:#569cd6">as</span> lifetime_value</div>
<div class="ln" style="top:325.2px;color:#a4abb6">14</div>
<div class="cl" style="top:325.2px">   <span style="color:#569cd6">from</span> orders</div>
<div class="ln" style="top:343.2px;color:#a4abb6">15</div>
<div class="cl" style="top:343.2px">   <span style="color:#569cd6">group</span> <span style="color:#569cd6">by</span> 1</div>
<div class="ln" style="top:361.2px;color:#a4abb6">16</div>
<div class="cl" style="top:361.2px"><span style="color:#ffd700">)</span>,</div>
<div class="ln" style="top:379.2px;color:#a4abb6">17</div>
<div class="cl" style="top:379.2px">final <span style="color:#569cd6">as</span> <span style="color:#ffd700">(</span></div>
<div class="ln" style="top:397.2px;color:#a4abb6">18</div>
<div class="cl" style="top:397.2px">   <span style="color:#569cd6">select</span></div>
<div class="ln" style="top:415.2px;color:#ffffff">19</div>
<div class="cl" style="top:415.2px">       customers.customer_id,</div>
<div class="ln" style="top:433.2px;color:#a4abb6">20</div>
<div class="cl" style="top:433.2px">       customers.first_name,</div>
<div class="ln" style="top:451.2px;color:#a4abb6">21</div>
<div class="cl" style="top:451.2px">       customers.last_name,</div>
<div class="ln" style="top:469.2px;color:#a4abb6">22</div>
<div class="cl" style="top:469.2px">       customer_orders.first_order_date,</div>
<div class="ln" style="top:487.2px;color:#a4abb6">23</div>
<div class="cl" style="top:487.2px">       customer_orders.most_recent_order_date,</div>
<div class="ln" style="top:505.2px;color:#a4abb6">24</div>
<div class="cl" style="top:505.2px">       <span style="color:#cc22cc">coalesce</span><span style="color:#da70d6">(</span>customer_orders.number_of_orders, <span style="color:#b5cea8">0</span><span style="color:#da70d6">)</span> <span style="color:#569cd6">as</span> number_of_orders,</div>
<div class="ln" style="top:523.2px;color:#a4abb6">25</div>
<div class="cl" style="top:523.2px">       customer_orders.lifetime_value</div>
<div class="ln" style="top:541.2px;color:#a4abb6">26</div>
<div class="cl" style="top:541.2px">   <span style="color:#569cd6">from</span> customers</div>
<div class="ln" style="top:559.2px;color:#a4abb6">27</div>
<div class="cl" style="top:559.2px">   <span style="color:#778899">left join</span> customer_orders <span style="color:#569cd6">using</span> <span style="color:#da70d6">(</span>customer_id<span style="color:#da70d6">)</span></div>
<div class="ln" style="top:577.2px;color:#a4abb6">28</div>
<div class="cl" style="top:577.2px"><span style="color:#ffd700">)</span></div>
<div class="ln" style="top:595.2px;color:#a4abb6">29</div>
<div class="cl" style="top:595.2px"><span style="color:#569cd6">select</span> <span class="as" style="color:#778899">*</span> <span style="color:#569cd6">from</span> final</div>
<svg class="abs" style="left:1742px;top:89px" width="90" height="62" viewBox="0 0 90 62" shape-rendering="crispEdges"><rect x="1" y="1" width="4" height="1" fill="#569cd6" opacity="0.42"/><rect x="6" y="1" width="9" height="1" fill="#eef0f3" opacity="0.42"/><rect x="16" y="1" width="2" height="1" fill="#569cd6" opacity="0.42"/><rect x="19" y="1" width="1" height="1" fill="#ffd700" opacity="0.42"/><rect x="4" y="3" width="6" height="1" fill="#569cd6" opacity="0.42"/><rect x="11" y="3" width="1" height="1" fill="#778899" opacity="0.42"/><rect x="13" y="3" width="4" height="1" fill="#569cd6" opacity="0.42"/><rect x="18" y="3" width="1" height="1" fill="#da70d6" opacity="0.42"/><rect x="19" y="3" width="1" height="1" fill="#179fff" opacity="0.42"/><rect x="21" y="3" width="3" height="1" fill="#569cd6" opacity="0.42"/><rect x="24" y="3" width="1" height="1" fill="#ffd700" opacity="0.42"/><rect x="25" y="3" width="15" height="1" fill="#ce9178" opacity="0.42"/><rect x="40" y="3" width="1" height="1" fill="#ffd700" opacity="0.42"/><rect x="41" y="3" width="1" height="1" fill="#179fff" opacity="0.42"/><rect x="42" y="3" width="1" height="1" fill="#da70d6" opacity="0.42"/><rect x="1" y="5" width="1" height="1" fill="#ffd700" opacity="0.42"/><rect x="2" y="5" width="1" height="1" fill="#eef0f3" opacity="0.42"/><rect x="1" y="7" width="6" height="1" fill="#eef0f3" opacity="0.42"/><rect x="8" y="7" width="2" height="1" fill="#569cd6" opacity="0.42"/><rect x="11" y="7" width="1" height="1" fill="#ffd700" opacity="0.42"/><rect x="4" y="9" width="6" height="1" fill="#569cd6" opacity="0.42"/><rect x="11" y="9" width="1" height="1" fill="#778899" opacity="0.42"/><rect x="13" y="9" width="4" height="1" fill="#569cd6" opacity="0.42"/><rect x="18" y="9" width="1" height="1" fill="#da70d6" opacity="0.42"/><rect x="19" y="9" width="1" height="1" fill="#179fff" opacity="0.42"/><rect x="21" y="9" width="3" height="1" fill="#569cd6" opacity="0.42"/><rect x="24" y="9" width="1" height="1" fill="#ffd700" opacity="0.42"/><rect x="25" y="9" width="12" height="1" fill="#ce9178" opacity="0.42"/><rect x="37" y="9" width="1" height="1" fill="#ffd700" opacity="0.42"/><rect x="38" y="9" width="1" height="1" fill="#179fff" opacity="0.42"/><rect x="39" y="9" width="1" height="1" fill="#da70d6" opacity="0.42"/><rect x="1" y="11" width="1" height="1" fill="#ffd700" opacity="0.42"/><rect x="2" y="11" width="1" height="1" fill="#eef0f3" opacity="0.42"/><rect x="1" y="13" width="15" height="1" fill="#eef0f3" opacity="0.42"/><rect x="17" y="13" width="2" height="1" fill="#569cd6" opacity="0.42"/><rect x="20" y="13" width="1" height="1" fill="#ffd700" opacity="0.42"/><rect x="4" y="15" width="6" height="1" fill="#569cd6" opacity="0.42"/><rect x="8" y="17" width="12" height="1" fill="#eef0f3" opacity="0.42"/><rect x="8" y="19" width="3" height="1" fill="#cc22cc" opacity="0.42"/><rect x="11" y="19" width="1" height="1" fill="#da70d6" opacity="0.42"/><rect x="12" y="19" width="10" height="1" fill="#eef0f3" opacity="0.42"/><rect x="22" y="19" width="1" height="1" fill="#da70d6" opacity="0.42"/><rect x="24" y="19" width="2" height="1" fill="#569cd6" opacity="0.42"/><rect x="27" y="19" width="17" height="1" fill="#eef0f3" opacity="0.42"/><rect x="8" y="21" width="3" height="1" fill="#cc22cc" opacity="0.42"/><rect x="11" y="21" width="1" height="1" fill="#da70d6" opacity="0.42"/><rect x="12" y="21" width="10" height="1" fill="#eef0f3" opacity="0.42"/><rect x="22" y="21" width="1" height="1" fill="#da70d6" opacity="0.42"/><rect x="24" y="21" width="2" height="1" fill="#569cd6" opacity="0.42"/><rect x="27" y="21" width="23" height="1" fill="#eef0f3" opacity="0.42"/><rect x="8" y="23" width="5" height="1" fill="#cc22cc" opacity="0.42"/><rect x="13" y="23" width="1" height="1" fill="#da70d6" opacity="0.42"/><rect x="14" y="23" width="8" height="1" fill="#eef0f3" opacity="0.42"/><rect x="22" y="23" width="1" height="1" fill="#da70d6" opacity="0.42"/><rect x="24" y="23" width="2" height="1" fill="#569cd6" opacity="0.42"/><rect x="27" y="23" width="17" height="1" fill="#eef0f3" opacity="0.42"/><rect x="8" y="25" width="3" height="1" fill="#cc22cc" opacity="0.42"/><rect x="11" y="25" width="1" height="1" fill="#da70d6" opacity="0.42"/><rect x="12" y="25" width="6" height="1" fill="#eef0f3" opacity="0.42"/><rect x="18" y="25" width="1" height="1" fill="#da70d6" opacity="0.42"/><rect x="20" y="25" width="2" height="1" fill="#569cd6" opacity="0.42"/><rect x="23" y="25" width="14" height="1" fill="#eef0f3" opacity="0.42"/><rect x="4" y="27" width="4" height="1" fill="#569cd6" opacity="0.42"/><rect x="9" y="27" width="6" height="1" fill="#eef0f3" opacity="0.42"/><rect x="4" y="29" width="5" height="1" fill="#569cd6" opacity="0.42"/><rect x="10" y="29" width="2" height="1" fill="#569cd6" opacity="0.42"/><rect x="13" y="29" width="1" height="1" fill="#eef0f3" opacity="0.42"/><rect x="1" y="31" width="1" height="1" fill="#ffd700" opacity="0.42"/><rect x="2" y="31" width="1" height="1" fill="#eef0f3" opacity="0.42"/><rect x="1" y="33" width="5" height="1" fill="#eef0f3" opacity="0.42"/><rect x="7" y="33" width="2" height="1" fill="#569cd6" opacity="0.42"/><rect x="10" y="33" width="1" height="1" fill="#ffd700" opacity="0.42"/><rect x="4" y="35" width="6" height="1" fill="#569cd6" opacity="0.42"/><rect x="8" y="37" width="22" height="1" fill="#eef0f3" opacity="0.42"/><rect x="8" y="39" width="21" height="1" fill="#eef0f3" opacity="0.42"/><rect x="8" y="41" width="20" height="1" fill="#eef0f3" opacity="0.42"/><rect x="8" y="43" width="33" height="1" fill="#eef0f3" opacity="0.42"/><rect x="8" y="45" width="39" height="1" fill="#eef0f3" opacity="0.42"/><rect x="8" y="47" width="8" height="1" fill="#cc22cc" opacity="0.42"/><rect x="16" y="47" width="1" height="1" fill="#da70d6" opacity="0.42"/><rect x="17" y="47" width="33" height="1" fill="#eef0f3" opacity="0.42"/><rect x="51" y="47" width="1" height="1" fill="#b5cea8" opacity="0.42"/><rect x="52" y="47" width="1" height="1" fill="#da70d6" opacity="0.42"/><rect x="54" y="47" width="2" height="1" fill="#569cd6" opacity="0.42"/><rect x="57" y="47" width="17" height="1" fill="#eef0f3" opacity="0.42"/><rect x="8" y="49" width="30" height="1" fill="#eef0f3" opacity="0.42"/><rect x="4" y="51" width="4" height="1" fill="#569cd6" opacity="0.42"/><rect x="9" y="51" width="9" height="1" fill="#eef0f3" opacity="0.42"/><rect x="4" y="53" width="4" height="1" fill="#778899" opacity="0.42"/><rect x="9" y="53" width="4" height="1" fill="#778899" opacity="0.42"/><rect x="14" y="53" width="15" height="1" fill="#eef0f3" opacity="0.42"/><rect x="30" y="53" width="5" height="1" fill="#569cd6" opacity="0.42"/><rect x="36" y="53" width="1" height="1" fill="#da70d6" opacity="0.42"/><rect x="37" y="53" width="11" height="1" fill="#eef0f3" opacity="0.42"/><rect x="48" y="53" width="1" height="1" fill="#da70d6" opacity="0.42"/><rect x="1" y="55" width="1" height="1" fill="#ffd700" opacity="0.42"/><rect x="1" y="57" width="6" height="1" fill="#569cd6" opacity="0.42"/><rect x="8" y="57" width="1" height="1" fill="#778899" opacity="0.42"/><rect x="10" y="57" width="4" height="1" fill="#569cd6" opacity="0.42"/><rect x="15" y="57" width="5" height="1" fill="#eef0f3" opacity="0.42"/></svg>
<!-- part_lineage -->
<div class="abs" style="left:425.3px;top:804.2px;width:1444px;height:199px;background:#1f2937;"></div>
<svg class="abs" style="left:426px;top:804px" width="1443" height="199" viewBox="426 804 1443 199" fill="none" stroke="#8f96a0" stroke-width="1.4"><path d="M775 903.2 C 797 903.2, 806 912, 819.5 919.2 L 858 940"/><path d="M786 970.6 C 808 970.6, 818 957, 840 942 L 866 925"/><path d="M1137 903.6 H1239"/><path d="M1422 903.6 C 1448 903.6, 1442 869, 1468 869"/><path d="M1422 903.6 C 1448 903.6, 1442 936, 1468 936"/></svg>
<div class="abs" style="left:673px;top:809px;width:160px;height:51px;background:#111827;border:1px solid #38434f;border-radius:3.5px;"></div>
<div class="abs" style="left:683px;top:822.2px;width:25px;height:25px;background:#a6e3db;border-radius:2.5px;"></div>
<svg class="abs" style="left:691px;top:825.4000000000001px;" width="9" height="9.5" viewBox="0 0 10 10.6" fill="none" stroke="#3f7b7c" stroke-width="0.9" stroke-linecap="round" stroke-linejoin="round"><rect x="1.2" y="0.8" width="7.6" height="9" rx="1.6"/><path d="M1.2 3.6 H8.8 M1.2 6.6 H8.8"/></svg>
<div class="t" style="left:688.4px;top:837.18px;font-size:8px;color:#3f7b7c;font-family:'Liberation Mono',monospace;letter-spacing:-0.25px;">SRC</div>
<div class="t" style="left:717.3px;top:831.00px;font-size:10.4px;color:#f3f4f6;-webkit-text-stroke:0.22px #f3f4f6;letter-spacing:-0.519px;">jaffle_shop.customers</div>
<div class="abs" style="left:673px;top:876px;width:102px;height:51.5px;background:#111827;border:1px solid #38434f;border-radius:3.5px;"></div>
<div class="abs" style="left:683px;top:889.45px;width:25px;height:25px;background:#b9e8f7;border-radius:2.5px;"></div>
<svg class="abs" style="left:691px;top:892.6500000000001px;" width="9" height="9.5" viewBox="0 0 10 10.6" fill="none" stroke="#4a8298" stroke-width="0.9" stroke-linecap="round" stroke-linejoin="round"><path d="M5 0.6 L9.2 3 V7.8 L5 10.2 L0.8 7.8 V3 Z M0.9 3.1 L5 5.4 L9.1 3.1 M5 5.4 V10.1"/></svg>
<div class="t" style="left:688.4px;top:904.43px;font-size:8px;color:#4a8298;font-family:'Liberation Mono',monospace;letter-spacing:-0.25px;">MDL</div>
<div class="t" style="left:717.3px;top:898.25px;font-size:10.4px;color:#f3f4f6;-webkit-text-stroke:0.22px #f3f4f6;letter-spacing:-0.609px;">stg_orders</div>
<div class="abs" style="left:673px;top:943px;width:113.5px;height:51.5px;background:#111827;border:1px solid #38434f;border-radius:3.5px;"></div>
<div class="abs" style="left:683px;top:956.45px;width:25px;height:25px;background:#b9e8f7;border-radius:2.5px;"></div>
<svg class="abs" style="left:691px;top:959.6500000000001px;" width="9" height="9.5" viewBox="0 0 10 10.6" fill="none" stroke="#4a8298" stroke-width="0.9" stroke-linecap="round" stroke-linejoin="round"><path d="M5 0.6 L9.2 3 V7.8 L5 10.2 L0.8 7.8 V3 Z M0.9 3.1 L5 5.4 L9.1 3.1 M5 5.4 V10.1"/></svg>
<div class="t" style="left:688.4px;top:971.43px;font-size:8px;color:#4a8298;font-family:'Liberation Mono',monospace;letter-spacing:-0.25px;">MDL</div>
<div class="t" style="left:717.3px;top:965.25px;font-size:10.4px;color:#f3f4f6;-webkit-text-stroke:0.22px #f3f4f6;letter-spacing:-0.600px;">stg_payments</div>
<div class="abs" style="left:865.5px;top:910px;width:101.5px;height:51px;background:#111827;border:1px solid #38434f;border-radius:3.5px;"></div>
<div class="abs" style="left:875.5px;top:923.2px;width:25px;height:25px;background:#b9e8f7;border-radius:2.5px;"></div>
<svg class="abs" style="left:883.5px;top:926.4000000000001px;" width="9" height="9.5" viewBox="0 0 10 10.6" fill="none" stroke="#4a8298" stroke-width="0.9" stroke-linecap="round" stroke-linejoin="round"><path d="M5 0.6 L9.2 3 V7.8 L5 10.2 L0.8 7.8 V3 Z M0.9 3.1 L5 5.4 L9.1 3.1 M5 5.4 V10.1"/></svg>
<div class="abs" style="left:1020px;top:880px;width:118px;height:48px;box-shadow:0 10px 22px 2px rgba(120,130,150,0.17);border-radius:4px;"></div>
<div class="abs" style="left:1035px;top:875.6px;width:103px;height:52px;background:#111827;border:1.7px solid #d2d6dc;border-radius:3.5px;"></div>
<div class="abs" style="left:1045px;top:889.3000000000001px;width:25px;height:25px;background:#b9e8f7;border-radius:2.5px;"></div>
<svg class="abs" style="left:1053px;top:892.5000000000001px;" width="9" height="9.5" viewBox="0 0 10 10.6" fill="none" stroke="#4a8298" stroke-width="0.9" stroke-linecap="round" stroke-linejoin="round"><path d="M5 0.6 L9.2 3 V7.8 L5 10.2 L0.8 7.8 V3 Z M0.9 3.1 L5 5.4 L9.1 3.1 M5 5.4 V10.1"/></svg>
<div class="t" style="left:1050.4px;top:904.28px;font-size:8px;color:#4a8298;font-family:'Liberation Mono',monospace;letter-spacing:-0.25px;">MDL</div>
<div class="t" style="left:1079.7px;top:898.10px;font-size:10.4px;color:#f3f4f6;-webkit-text-stroke:0.22px #f3f4f6;letter-spacing:-0.593px;">customers</div>
<div class="abs" style="left:1239px;top:876.3px;width:183.5px;height:50.7px;background:#111827;border:1px solid #38434f;border-radius:3.5px;"></div>
<div class="abs" style="left:1249px;top:889.35px;width:25px;height:25px;background:#fba3ae;border-radius:2.5px;"></div>
<svg class="abs" style="left:1257px;top:892.5500000000001px;" width="9" height="9.5" viewBox="0 0 10 10.6" fill="none" stroke="#b5474f" stroke-width="0.9" stroke-linecap="round" stroke-linejoin="round"><circle cx="2.6" cy="1.8" r="1.2"/><circle cx="7.6" cy="4" r="1.2"/><path d="M2.6 3 V9.6 M2.6 6.6 Q2.6 4.2 6.4 4"/></svg>
<div class="t" style="left:1254.4px;top:904.33px;font-size:8px;color:#b5474f;font-family:'Liberation Mono',monospace;letter-spacing:-0.25px;">SEM</div>
<div class="t" style="left:1283.3px;top:898.15px;font-size:10.4px;color:#f3f4f6;-webkit-text-stroke:0.22px #f3f4f6;letter-spacing:-0.531px;">dim_customers_test_for_parse</div>
<div class="abs" style="left:1468px;top:843px;width:143.5px;height:50.5px;background:#111827;border:1px solid #38434f;border-radius:3.5px;"></div>
<div class="abs" style="left:1478px;top:855.95px;width:25px;height:25px;background:#f8df7e;border-radius:2.5px;"></div>
<svg class="abs" style="left:1486px;top:859.1500000000001px;" width="9" height="9.5" viewBox="0 0 10 10.6" fill="none" stroke="#8a6d10" stroke-width="0.9" stroke-linecap="round" stroke-linejoin="round"><path d="M1 1 V9 H9.4 M3 8.8 V5.2 H4.8 V8.8 M6.4 8.8 V2.4 H8.2 V8.8"/></svg>
<div class="t" style="left:1483.4px;top:870.93px;font-size:8px;color:#8a6d10;font-family:'Liberation Mono',monospace;letter-spacing:-0.25px;">MET</div>
<div class="t" style="left:1512.3px;top:864.75px;font-size:10.4px;color:#f3f4f6;-webkit-text-stroke:0.22px #f3f4f6;letter-spacing:-0.579px;">customers_for_parse</div>
<div class="abs" style="left:1468px;top:909.7px;width:153.2px;height:51.2px;background:#111827;border:1px solid #38434f;border-radius:3.5px;"></div>
<div class="abs" style="left:1478px;top:923.0000000000001px;width:25px;height:25px;background:#f8df7e;border-radius:2.5px;"></div>
<svg class="abs" style="left:1486px;top:926.2000000000002px;" width="9" height="9.5" viewBox="0 0 10 10.6" fill="none" stroke="#8a6d10" stroke-width="0.9" stroke-linecap="round" stroke-linejoin="round"><path d="M1 1 V9 H9.4 M3 8.8 V5.2 H4.8 V8.8 M6.4 8.8 V2.4 H8.2 V8.8"/></svg>
<div class="t" style="left:1483.4px;top:937.98px;font-size:8px;color:#8a6d10;font-family:'Liberation Mono',monospace;letter-spacing:-0.25px;">MET</div>
<div class="t" style="left:1512.3px;top:931.80px;font-size:10.4px;color:#f3f4f6;-webkit-text-stroke:0.22px #f3f4f6;letter-spacing:-0.496px;">customers_with_orders</div>
<div class="abs" style="left:1444.5px;top:828px;width:192.5px;height:39.8px;background:rgba(17,24,39,0.95);border:1px solid #465161;border-radius:6px 0 0 6px;"></div>
<div class="t" style="left:1456.3px;top:842.43px;font-size:13.2px;color:#e8eaee;-webkit-text-stroke:0.42px #e8eaee;letter-spacing:-0.147px;">2+customers+2</div>
<div class="abs" style="left:1636px;top:828px;width:104.5px;height:39.8px;background:#1f2937;border:1px solid #465161;border-radius:0 6px 6px 0;"></div>
<div class="t" style="left:1647.6px;top:842.43px;font-size:13.2px;color:#f3f4f6;-webkit-text-stroke:0.42px #f3f4f6;letter-spacing:-0.104px;">Update Graph</div>
<div class="abs" style="left:1757.4px;top:828px;width:39.5px;height:39.8px;background:#1f2937;border:1px solid #465161;border-radius:6px;"></div>
<svg class="abs" style="left:1768.5px;top:839.5px;" width="17" height="17" viewBox="0 0 17 17" fill="none" stroke="#f3f4f6" stroke-width="1.5" stroke-linecap="round" stroke-linejoin="round"><path d="M1 5.6 V1 H5.6 M11.4 1 H16 V5.6 M16 11.4 V16 H11.4 M5.6 16 H1 V11.4"/></svg>
<div class="abs" style="left:1805.4px;top:828px;width:39.5px;height:39.8px;background:#1f2937;border:1px solid #465161;border-radius:6px;"></div>
<svg class="abs" style="left:1816.5px;top:839.5px;" width="17" height="17" viewBox="0 0 17 17" fill="none" stroke="#f3f4f6" stroke-width="1.5" stroke-linecap="round" stroke-linejoin="round"><path d="M14.6 8.8 a6.2 6.2 0 1 1 -2.2 -4.9"/><path d="M9.8 1 L13.2 3.6 L10.4 6.8" /></svg>
<div class="abs" style="left:818.7px;top:803.8px;width:224.7px;height:138.6px;background:#1f2937;border:1px solid #27313f;border-radius:7px;box-shadow:0 4px 10px rgba(3,7,18,0.30);"></div>
<div class="t" style="left:840px;top:824.94px;font-size:13.6px;color:#f9fafb;-webkit-text-stroke:0.42px #f9fafb;letter-spacing:-0.245px;">Generate Documentation</div>
<div class="t" style="left:840px;top:866.94px;font-size:13.6px;color:#f9fafb;-webkit-text-stroke:0.42px #f9fafb;letter-spacing:-0.481px;">Generate Tests</div>
<div class="t" style="left:840px;top:908.84px;font-size:13.6px;color:#f9fafb;-webkit-text-stroke:0.42px #f9fafb;letter-spacing:-0.344px;">Generate Semantic Model</div>
<svg class="abs" style="left:863.6px;top:772.6px" width="13" height="14.6" viewBox="0 0 17 19"><path d="M5.2 1.2 a1.3 1.3 0 0 1 2.6 0 V7.2 L8 6 a1.2 1.2 0 0 1 2.4 .2 V7.4 a1.2 1.2 0 0 1 2.3 .3 V8.4 a1.1 1.1 0 0 1 2.2 .3 V12.6 C14.9 16 13.2 18 10.2 18 H8.6 C6.4 18 5.4 17 4.2 15.2 L1.4 11.2 a1.3 1.3 0 0 1 2 -1.6 L5.2 11.4 Z" fill="#ffffff" stroke="#111827" stroke-width="0.9" stroke-linejoin="round"/></svg>
<div class="abs" style="left:426px;top:1003px;width:1443px;height:1px;background:#2f3a4a"></div>
<!-- part_bottom -->
<div class="abs" style="left:63px;top:1003px;width:1807px;height:40px;background:#1f2937;"></div>
<div class="abs" style="left:63px;top:1003px;width:1806px;height:1px;background:#313c4c"></div>
<div class="abs" style="left:100.8px;top:1004px;width:1px;height:39px;background:#313c4c"></div>
<svg class="abs" style="left:77.5px;top:1018.5px;" width="9" height="6.5" viewBox="0 0 9 6.5" fill="none" stroke="#c9ced6" stroke-width="1.4" stroke-linecap="round" stroke-linejoin="round"><path d="M0.9 5.4 L4.5 1.4 L8.1 5.4"/></svg>
<div class="t" style="left:117.7px;top:1018.23px;font-size:13px;color:#a9b0ba;-webkit-text-stroke:0.22px #a9b0ba;letter-spacing:0.118px;">dbt build --select &lt;model_name&gt;</div>
<div class="abs" style="left:1498.5px;top:1014px;width:40.5px;height:20px;background:#0f9691;border-radius:10px;"></div>
<svg class="abs" style="left:1505.5px;top:1020px;" width="10" height="8.5" viewBox="0 0 10 8.5" fill="none" stroke="#e6fffb" stroke-width="1.4" stroke-linecap="round" stroke-linejoin="round"><path d="M1 4.4 L3.8 7.2 L9 1.2"/></svg>
<div class="abs" style="left:1521px;top:1016.2px;width:15.6px;height:15.6px;background:#ffffff;border-radius:8px;"></div>
<div class="t" style="left:1549.8px;top:1017.93px;font-size:13px;color:#f7f8fa;font-weight:700;letter-spacing:-0.165px;">Defer to staging/production</div>
<svg class="abs" style="left:1719.7px;top:1016.2px;" width="13" height="13" viewBox="0 0 13 13" fill="none" stroke="#9aa3af" stroke-width="1.0" stroke-linecap="round" stroke-linejoin="round"><circle cx="6.5" cy="6.5" r="5.6"/><path d="M4.8 5.2 a1.8 1.8 0 1 1 2.6 1.6 Q6.5 7.3 6.5 8.2 M6.5 9.9 V10" stroke-width="1.05"/></svg>
<div class="abs" style="left:1744px;top:1011px;width:76.5px;height:26px;background:#103f3c;border-radius:13px;"></div>
<svg class="abs" style="left:1756.2px;top:1017.8px;" width="12.4" height="12.4" viewBox="0 0 12.4 12.4" fill="none" stroke="#1d6f66" stroke-width="1.3" stroke-linecap="round" stroke-linejoin="round"><circle cx="6.2" cy="6.2" r="5.3"/></svg>
<div class="t" style="left:1775.2px;top:1018.42px;font-size:12px;color:#35c893;font-weight:700;letter-spacing:-1.006px;">Ready</div>
<div class="abs" style="left:1827px;top:1008.3px;width:34px;height:31.5px;background:#1f2937;border:1px solid #4a5565;border-radius:6px;"></div>
<svg class="abs" style="left:1836px;top:1022px;" width="16" height="4" viewBox="0 0 16 4" fill="#f3f4f6" stroke="none" stroke-width="0" stroke-linecap="round" stroke-linejoin="round"><circle cx="3" cy="2" r="1.35"/><circle cx="8" cy="2" r="1.35"/><circle cx="13" cy="2" r="1.35"/></svg>
</div></div>
</body>
</html>
